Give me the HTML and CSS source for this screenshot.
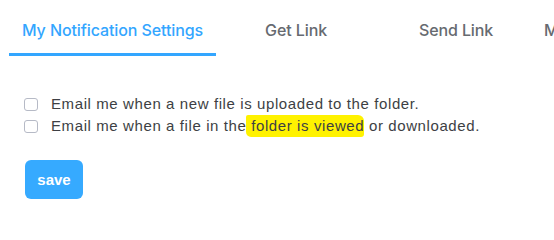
FILE: index.html
```html
<!DOCTYPE html>
<html>
<head>
<meta charset="utf-8">
<link rel="stylesheet" href="styles.css">
</head>
<body>
<div class="page">
  <nav class="tabs">
    <div class="tab active">My Notification Settings</div>
    <div class="tab">Get Link</div>
    <div class="tab">Send Link</div>
    <div class="tab last">Manage Access</div>
  </nav>
  <div class="options">
    <label class="option"><span class="box"></span><span class="label">Email me when a new file is uploaded to the folder.</span></label>
    <label class="option"><span class="box"></span><span class="label">Email me when a file in the<span class="hl"> folder is viewed</span> or downloaded.</span></label>
  </div>
  <button class="save">save</button>
</div>
</body>
</html>
```
FILE: styles.css
```css
html, body {
  margin: 0;
  padding: 0;
  background: #fff;
  overflow: hidden;
}
.page {
  width: 554px;
  height: 234px;
  overflow: hidden;
}
.tabs {
  display: flex;
  padding-left: 9px;
  height: 56px;
  white-space: nowrap;
}
.tab {
  box-sizing: border-box;
  min-width: 160px;
  padding: 20px 13px 0;
  text-align: center;
  font-family: "Inter", "Noto Sans", sans-serif;
  font-weight: 500;
  font-size: 16px;
  letter-spacing: -0.1px;
  color: #666a70;
  flex: none;
}
.tab.active {
  color: #33a6ff;
  border-bottom: 3px solid #33a6ff;
}
.tab.last {
  text-align: left;
  padding-left: 8px;
}
.options {
  display: flex;
  flex-direction: column;
  padding: 39px 0 0 24px;
  gap: 4px;
}
.option {
  display: flex;
  align-items: center;
  height: 18px;
  line-height: 18px;
  font-family: "Liberation Sans", Arial, sans-serif;
  font-size: 15px;
  letter-spacing: 0.6px;
  color: #3d3f44;
}
.box {
  box-sizing: border-box;
  width: 14px;
  height: 13px;
  border: 1px solid #b6bac6;
  border-radius: 3px;
  margin-right: 13px;
  flex: none;
}
.hl {
  background: #fff200;
  border-radius: 2px 6px 3px 5px;
  padding: 2px 0 3px;
}
.save {
  display: block;
  margin: 25px 0 0 25px;
  width: 58px;
  height: 39px;
  border: none;
  border-radius: 6px;
  background: #36aaff;
  color: #fff;
  font-family: "Liberation Sans", Arial, sans-serif;
  font-weight: bold;
  font-size: 15px;
  padding: 0;
}
```
